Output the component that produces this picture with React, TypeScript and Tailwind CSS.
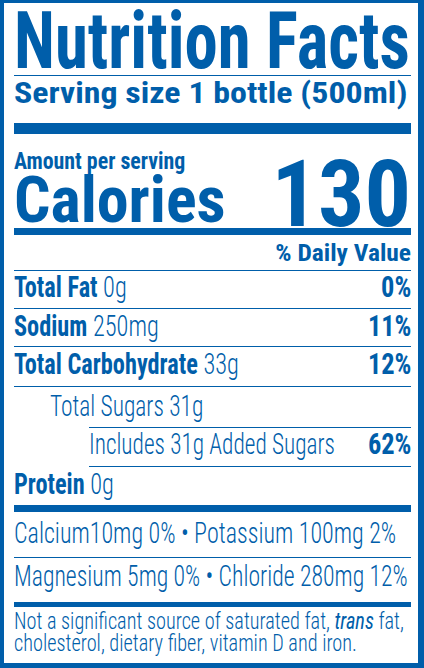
function Row({
  left,
  right,
  leftScale = "scale-x-[0.81]",
  className = "",
}: {
  left: React.ReactNode;
  right?: React.ReactNode;
  leftScale?: string;
  className?: string;
}) {
  return (
    <div className={`flex items-start ${className}`}>
      <div className={`min-w-0 flex-1 whitespace-nowrap leading-none origin-left ${leftScale}`}>{left}</div>
      {right ? (
        <div className="shrink-0 leading-none font-bold origin-right scale-x-[0.88]">{right}</div>
      ) : null}
    </div>
  );
}

export default function App() {
  return (
    <div className="w-[424px] h-[668px] bg-white border-[#005eaa] border-l-[4px] border-t-[3px] border-r-[6px] border-b-[5px] pl-[10px] pr-[7px] font-['Roboto_Condensed',sans-serif] text-[#005eaa] overflow-hidden">
      {/* Title */}
      <div className="h-[75px] border-b border-[#005eaa]">
        <div className="-mt-[2px] text-[80px] font-bold leading-none whitespace-nowrap origin-left scale-x-[0.835]">
          Nutrition Facts
        </div>
      </div>
      {/* Serving size */}
      <div className="h-[47px] pt-[2px]">
        <div className="text-[30px] font-bold leading-none whitespace-nowrap origin-left scale-x-[1.13]">
          Serving size 1 bottle (500ml)
        </div>
      </div>
      <div className="h-[11px] bg-[#005eaa]" />
      {/* Calories */}
      <div className="h-[94px] flex justify-between">
        <div className="pt-[16px]">
          <div className="text-[23px] font-bold leading-none whitespace-nowrap origin-left scale-x-[0.95]">
            Amount per serving
          </div>
          <div className="-mt-[4px] text-[64px] font-bold leading-none">Calories</div>
        </div>
        <div className="pt-[15px] text-[92px] font-bold leading-none">130</div>
      </div>
      <div className="h-[7px] bg-[#005eaa]" />
      {/* % Daily Value */}
      <div className="h-[36px] pt-[6px] border-b border-[#005eaa] flex justify-end">
        <div className="text-[24px] font-bold leading-none whitespace-nowrap origin-right scale-x-[1.06]">
          % Daily Value
        </div>
      </div>
      <Row
        className="h-[38px] pt-[1px] border-b border-[#005eaa] text-[30px]"
        left={
          <>
            <span className="font-bold">Total Fat</span> <span className="font-light">0g</span>
          </>
        }
        right="0%"
      />
      <Row
        className="h-[38px] pt-[2px] border-b border-[#005eaa] text-[30px]"
        left={
          <>
            <span className="font-bold">Sodium</span> <span className="font-light">250mg</span>
          </>
        }
        right="11%"
      />
      <Row
        className="h-[40px] pt-[2px] border-b border-[#005eaa] text-[30px]"
        left={
          <>
            <span className="font-bold">Total Carbohydrate</span> <span className="font-light">33g</span>
          </>
        }
        right="12%"
      />
      <div className="h-[40px] pt-[4px] pl-[36px] text-[30px] font-light leading-none whitespace-nowrap">
        <div className="origin-left scale-x-[0.78]">Total Sugars 31g</div>
      </div>
      <Row
        className="ml-[75px] h-[40px] pt-[1px] border-t border-b border-[#005eaa] text-[30px]"
        leftScale="scale-x-[0.775]"
        left={<span className="font-light">Includes 31g Added Sugars</span>}
        right="62%"
      />
      <Row
        className="h-[38px] pt-[2px] text-[30px]"
        left={
          <>
            <span className="font-bold">Protein</span> <span className="font-light">0g</span>
          </>
        }
      />
      <div className="h-[7px] bg-[#005eaa]" />
      <div className="h-[46px] pt-[6px] border-b border-[#005eaa] text-[30px] font-light leading-none whitespace-nowrap">
        <div className="origin-left scale-x-[0.8]">Calcium10mg 0% • Potassium 100mg 2%</div>
      </div>
      <div className="h-[44px] pt-[3px] text-[30px] font-light leading-none whitespace-nowrap">
        <div className="origin-left scale-x-[0.79]">Magnesium 5mg 0% • Chloride 280mg 12%</div>
      </div>
      <div className="h-[5px] bg-[#005eaa]" />
      <div className="pt-[3px] text-[24px] font-light leading-[22px] whitespace-nowrap">
        <div className="origin-left scale-x-[0.845]">
          Not a significant source of saturated fat, <span className="italic font-normal">trans</span> fat,
          <br />
          cholesterol, dietary fiber, vitamin D and iron.
        </div>
      </div>
    </div>
  );
}
